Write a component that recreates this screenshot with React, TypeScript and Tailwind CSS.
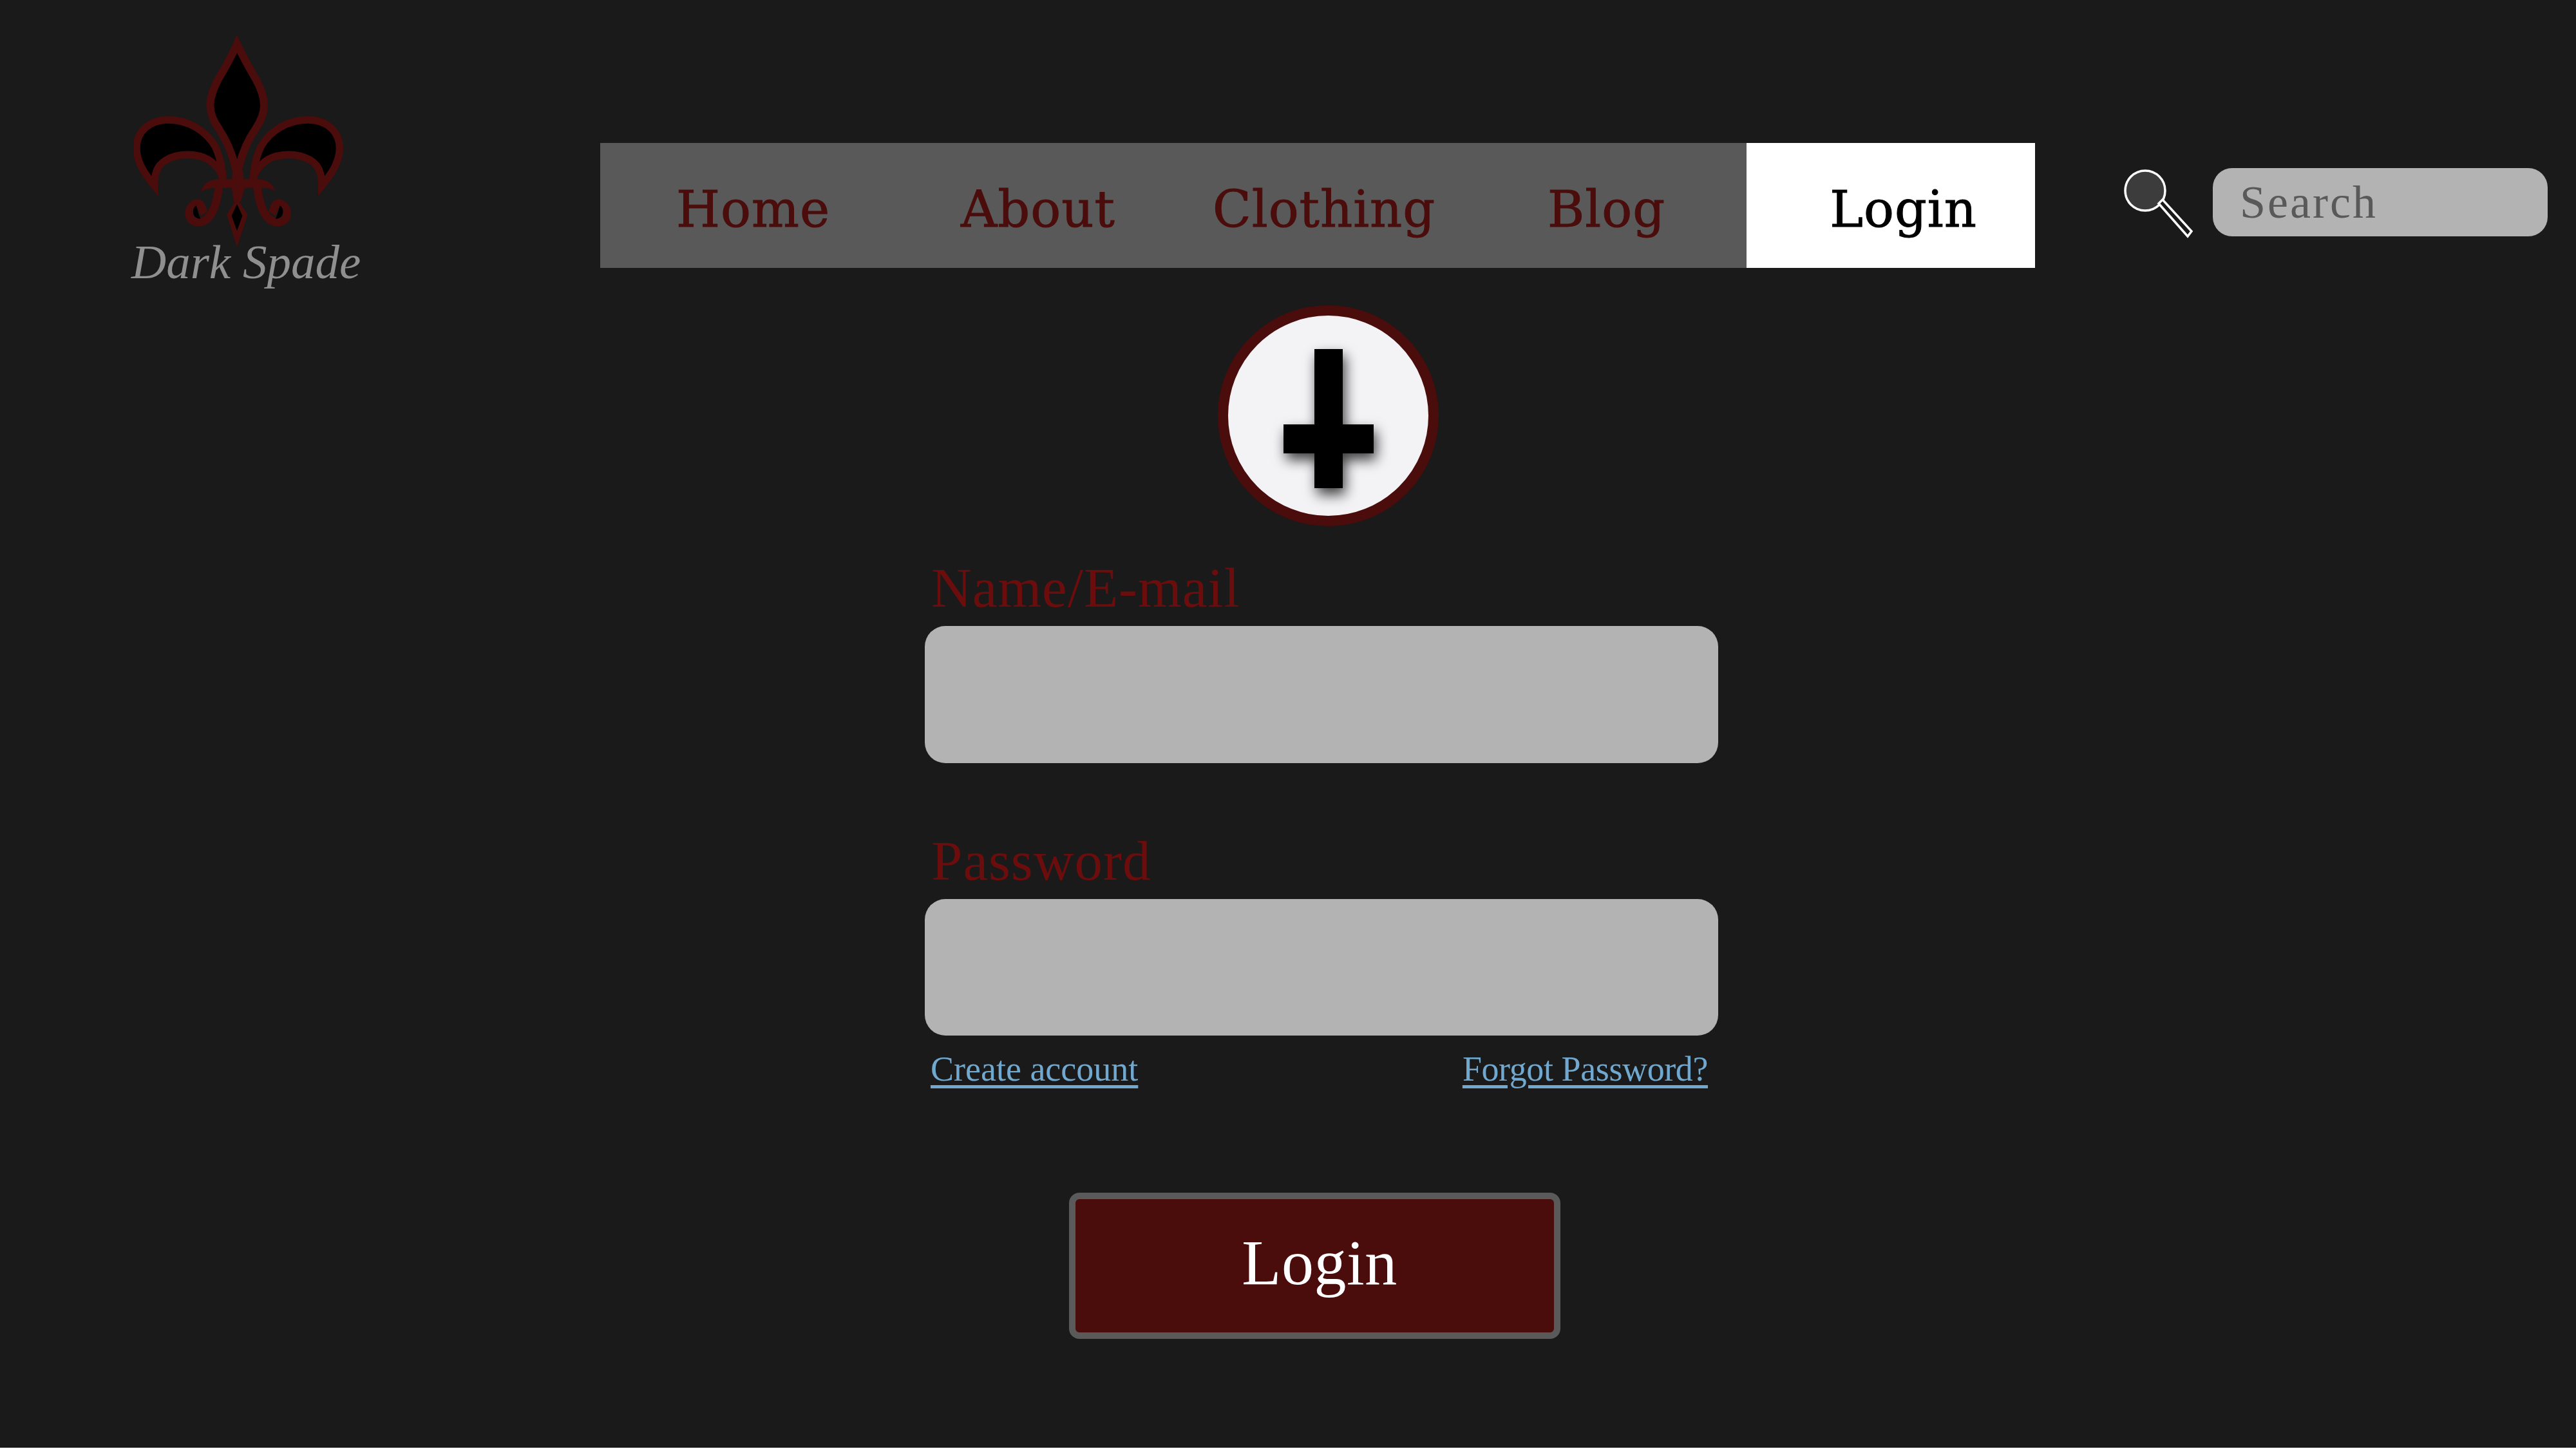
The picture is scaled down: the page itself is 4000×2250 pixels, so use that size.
import React from 'react';

const navLinks = [
  { label: 'Home', cell: 'w-[442px]' },
  { label: 'About', cell: 'w-[391px]' },
  { label: 'Clothing', cell: 'w-[520px]' },
  { label: 'Blog', cell: 'w-[200px]' },
];

const Petal: React.FC = () => (
  <>
    <path
      d="M270 775 C225 720 187 665 187 600 C187 520 250 468 335 468 C430 468 510 520 552 590 C572 630 585 680 590 745 C580 700 540 652 480 637 C400 620 330 640 295 680 C275 705 270 740 270 775 Z"
      fill="#000"
      strokeWidth={34}
    />
    <path
      d="M572 760 C566 850 540 945 475 945 C445 945 432 925 432 905 C432 875 455 855 475 858 C492 862 490 885 503 905"
      fill="none"
      strokeWidth={38}
    />
    <path d="M465 868 C442 880 445 928 485 930 C474 905 470 885 465 868 Z" fill="#000" stroke="none" />
  </>
);

const Logo: React.FC = () => (
  <svg viewBox="175 75 975 990" className="w-[325px] h-[330px] ml-[4px]">
    <g stroke="#4b0c0c" strokeLinejoin="miter" strokeMiterlimit={6}>
      <path
        d="M655 115 C625 185 590 240 565 285 C542 330 530 370 530 400 C530 450 552 485 572 512 C610 570 640 640 655 725 C672 640 700 570 742 510 C762 480 781 440 781 400 C781 360 765 320 745 283 C720 240 688 185 655 115 Z"
        fill="#000"
        strokeWidth={36}
      />
      <Petal />
      <g transform="translate(1320 0) scale(-1 1)">
        <Petal />
      </g>
    </g>
    <path
      d="M488 805 C495 765 530 745 570 745 L750 745 C790 745 825 765 832 800 C810 785 790 785 760 785 L560 785 C530 785 505 790 488 805 Z"
      fill="#4b0c0c"
    />
    <path d="M635 700 L680 700 L692 785 L672 850 L640 850 L630 785 Z" fill="#4b0c0c" />
    <path d="M655 835 L607 910 L655 1060 L705 910 Z M655 862 L630 915 L655 985 L680 915 Z" fill="#4b0c0c" fillRule="evenodd" />
    <path d="M655 862 L630 915 L655 985 L680 915 Z" fill="#000" />
  </svg>
);

const SearchIcon: React.FC = () => (
  <svg viewBox="0 0 110 110" className="w-[110px] h-[110px] shrink-0">
    <circle cx="33" cy="33" r="31" fill="#3c3c3c" stroke="#fff" strokeWidth="3.5" />
    <path d="M54 53 L60 47 L105 96 L99 104 Z" fill="#1a1a1a" stroke="#fff" strokeWidth="3.5" />
  </svg>
);

const Field: React.FC<{ label: string; className?: string; inputClass: string }> = ({ label, className, inputClass }) => (
  <div className={className}>
    <label className="block h-[100px] pl-[10px] text-[87px] leading-[82px] tracking-[1px] text-[#6b0d0d]">{label}</label>
    <input type="text" className={`block w-full rounded-[32px] bg-[#b3b3b3] outline-none ${inputClass}`} />
  </div>
);

const App: React.FC = () => {
  return (
    <div className="w-[4000px] h-[2248px] bg-[#1a1a1a] overflow-hidden font-['Liberation_Serif',serif]">
      <header className="flex items-start h-[416px]">
        <div className="w-[932px] pl-[204px] pt-[55px] shrink-0">
          <Logo />
          <div className="-mt-[16px] text-[75px] leading-[75px] italic text-[#8f8f8f]">Dark Spade</div>
        </div>
        <nav className="flex items-center w-[2228px] h-[194px] mt-[222px] pl-[118px] bg-[#595959] shrink-0 font-['DejaVu_Serif',serif]">
          {navLinks.map((link) => (
            <a
              key={link.label}
              className={`${link.cell} pt-[13px] text-[78px] tracking-[1px] text-[#4b0c0c] [-webkit-text-stroke:1px_#4b0c0c]`}
            >
              {link.label}
            </a>
          ))}
          <a className="flex items-center justify-end w-[448px] h-full ml-auto pt-[13px] pr-[90px] bg-white text-[78px] tracking-[1px] text-black [-webkit-text-stroke:1px_#000]">
            Login
          </a>
        </nav>
        <div className="ml-[138px] mt-[263px]">
          <SearchIcon />
        </div>
        <div className="flex items-center w-[520px] h-[106px] mt-[261px] ml-[28px] pl-[42px] rounded-[30px] bg-[#b3b3b3] text-[72px] tracking-[3px] text-[#595959]">
          Search
        </div>
      </header>

      <main className="flex flex-col">
        <div className="flex items-center justify-center w-[343px] h-[343px] mt-[58px] ml-[1891px] rounded-full border-[16px] border-[#4b0c0c] bg-[#f3f3f6]">
          <svg viewBox="0 0 140 216" className="w-[140px] h-[216px] mt-[9px] overflow-visible drop-shadow-[4px_10px_10px_rgba(0,0,0,0.75)]">
            <path d="M48 0 H92 V117 H140 V162 H92 V216 H48 V162 H0 V117 H48 Z" fill="#000" />
          </svg>
        </div>

        <div className="w-[1232px] ml-[1436px] mt-[55px]">
          <Field label="Name/E-mail" inputClass="h-[213px]" />
          <Field label="Password" className="mt-[111px]" inputClass="h-[212px]" />
          <div className="flex justify-between pl-[9px] pr-[16px] pt-[3px] mt-[18px] h-[62px] text-[54px] leading-[62px] text-[#70a8d0]">
            <a className="underline decoration-[5px] underline-offset-[7px]">Create account</a>
            <a className="tracking-[-0.4px] underline decoration-[5px] underline-offset-[7px]">Forgot Password?</a>
          </div>
        </div>

        <button className="flex items-center justify-center w-[763px] h-[227px] mt-[164px] ml-[1660px] rounded-[16px] border-[10px] border-[#5a5a5a] bg-[#4b0c0c] pl-[15px] pb-[10px] text-[100px] tracking-[0.5px] text-white">
          Login
        </button>
      </main>
    </div>
  );
};

export default App;
